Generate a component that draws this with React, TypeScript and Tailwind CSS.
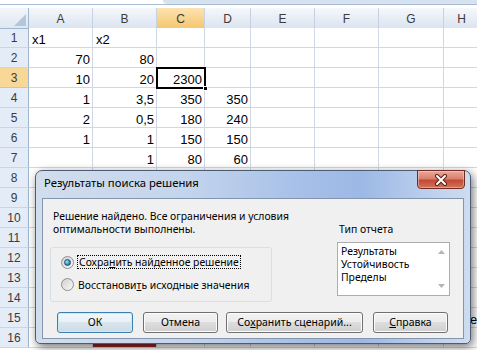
import React from "react";

const COLS = ["A", "B", "C", "D", "E", "F", "G", "H"];

type Cell = { v: string; left?: boolean } | null;

const DATA: Record<number, Cell[]> = {
  1: [{ v: "x1", left: true }, { v: "x2", left: true }],
  2: [{ v: "70" }, { v: "80" }],
  3: [{ v: "10" }, { v: "20" }, { v: "2300" }],
  4: [{ v: "1" }, { v: "3,5" }, { v: "350" }, { v: "350" }],
  5: [{ v: "2" }, { v: "0,5" }, { v: "180" }, { v: "240" }],
  6: [{ v: "1" }, { v: "1" }, { v: "150" }, { v: "150" }],
  7: [null, { v: "1" }, { v: "80" }, { v: "60" }],
};

const ROWS = Array.from({ length: 16 }, (_, i) => i + 1);

function Sheet() {
  return (
    <div className="grid grid-cols-[29px_64px_64px_48px_46px_64px_64px_65px_1fr] auto-rows-[20px] font-['Liberation_Sans',Arial,sans-serif]">
      <div className="h-[21px] border-r border-b border-[#9eb6ce] bg-[linear-gradient(#f3f6fa,#dfe7f1)] relative">
        <div className="absolute right-[2px] bottom-[2px] w-0 h-0 border-l-[12px] border-l-transparent border-b-[12px] border-b-[#b6c6da]" />
      </div>
      {COLS.map((c) => (
        <div
          key={c}
          className={
            c === "C"
              ? "h-[21px] border-r border-b border-r-[#c9d3e0] border-b-[#f2b54a] bg-[linear-gradient(#fbe3b2,#f6c66f)] flex items-center justify-center pt-[2px] text-[12px] text-[#3b3b3b]"
              : "h-[21px] border-r border-b border-r-[#c5d2e3] border-b-[#9eb6ce] bg-[linear-gradient(#f5f8fc,#dbe4f0)] flex items-center justify-center pt-[2px] text-[12px] text-[#3b3b3b]"
          }
        >
          {c}
        </div>
      ))}
      {ROWS.map((r) => (
        <React.Fragment key={r}>
          <div
            className={
              r === 3
                ? "border-r border-b border-r-[#9eb6ce] border-b-[#f2c16a] bg-[#f9d796] flex items-center justify-center pt-[1px] text-[12px] text-[#3b3b3b]"
                : "border-r border-b border-r-[#9eb6ce] border-b-[#c9d6e7] bg-[#e4ecf7] flex items-center justify-center pt-[1px] text-[12px] text-[#3b3b3b]"
            }
          >
            {r}
          </div>
          {COLS.map((c, ci) => {
            const cell = DATA[r]?.[ci] ?? null;
            const sel = r === 3 && c === "C";
            const red = r === 16 && c === "B";
            return (
              <div
                key={c}
                className={
                  (red ? "bg-[#9a2424] " : "bg-white ") +
                  "relative border-r border-b border-[#d0d7e5] flex items-end leading-[15px] text-[13px] text-black " +
                  (cell?.left ? "justify-start pl-[3px]" : "justify-end pr-[2px]")
                }
              >
                {cell?.v}
                {r === 15 && c === "H" && <span className="pl-[26px] text-[13px]">е</span>}
                {sel && (
                  <>
                    <div className="absolute left-[-1px] top-[-1px] w-[50px] h-[22px] border-2 border-black z-10 pointer-events-none" />
                    <div className="absolute left-[46px] top-[18px] w-[5px] h-[5px] bg-black border border-white z-20" />
                  </>
                )}
              </div>
            );
          })}
        </React.Fragment>
      ))}
    </div>
  );
}

function Radio({ checked }: { checked?: boolean }) {
  return (
    <span className="w-[13px] h-[13px] rounded-full border border-[#8e8f8f] bg-[linear-gradient(135deg,#d0d0d0,#fafafa)] flex items-center justify-center shrink-0">
      {checked && (
        <span className="w-[7px] h-[7px] rounded-full border border-[#1d4f6e] bg-[radial-gradient(circle_at_35%_35%,#9be6fb,#2d8cc0_60%,#15527a)]" />
      )}
    </span>
  );
}

function Btn({
  children,
  w,
  def,
}: {
  children: React.ReactNode;
  w: string;
  def?: boolean;
}) {
  return (
    <div
      className={
        w +
        " h-[21px] rounded-[3px] flex items-center justify-center text-[10.5px] text-black " +
        (def
          ? "border border-[#3c7fb1] shadow-[inset_0_0_0_1px_#c4ecfb] bg-[linear-gradient(#f2f8fb_0%,#e8f1f6_49%,#d9e5ec_50%,#cbdbe5_100%)]"
          : "border border-[#707070] shadow-[inset_0_0_0_1px_#fcfcfc] bg-[linear-gradient(#f2f2f2_0%,#ebebeb_49%,#dddddd_50%,#cfcfcf_100%)]")
      }
    >
      {children}
    </div>
  );
}

function Dialog() {
  return (
    <div className="absolute left-[35px] top-[170px] w-[436px] h-[174px] rounded-t-[7px] rounded-b-[5px] border border-[#4a5d75] shadow-[2px_3px_10px_rgba(0,0,0,0.55)] bg-[linear-gradient(90deg,#d2ddec_0%,#c3d4ec_35%,#a6bfe8_62%,#9db8e6_75%,#bfd1ee_92%,#cfdcef_100%)] font-['Noto_Sans',sans-serif] flex flex-col">
      <div className="h-[27px] shrink-0 flex items-center pl-[8px] pb-[3px] text-[11.3px] text-black relative">
        Результаты поиска решения
        <div className="absolute right-[5px] top-[-1px] w-[48px] h-[19px] rounded-b-[4px] border border-[#6e2b21] bg-[linear-gradient(#eaa89b_0%,#d9806f_45%,#c34a34_55%,#d0735b_100%)] shadow-[inset_0_0_0_1px_rgba(255,220,210,0.45)] flex items-center justify-center">
          <svg width="14" height="12" viewBox="0 0 14 12">
            <path d="M3 2 L11 10 M11 2 L3 10" stroke="#5a2018" strokeWidth="4" strokeLinecap="round" />
            <path d="M3 2 L11 10 M11 2 L3 10" stroke="#ffffff" strokeWidth="2" strokeLinecap="round" />
          </svg>
        </div>
      </div>
      <div className="mx-[6px] h-[141px] shrink-0 border border-[#8396ae] bg-[#f0f0f0] pl-[7px] pt-[11px] text-[10.4px] text-black">
        <div className="flex">
          <div className="w-[222px] shrink-0">
            <div className="pl-[3px] leading-[13px] whitespace-nowrap">
              <div>Решение найдено. Все ограничения и условия</div>
              <div>оптимальности выполнены.</div>
            </div>
            <div className="mt-[11px] h-[55px] rounded-[3px] border border-[#d5dfe5] pl-[10px] pt-[7px] flex flex-col gap-[9px]">
              <div className="flex items-center gap-[3px]">
                <Radio checked />
                <span className="border border-dotted border-black px-[1px] leading-[12px] whitespace-nowrap">
                  Сохра<span className="underline underline-offset-1">н</span>ить найденное решение
                </span>
              </div>
              <div className="flex items-center gap-[4px]">
                <Radio />
                <span className="leading-[12px] whitespace-nowrap">
                  Восстанови<span className="underline underline-offset-1">т</span>ь исходные значения
                </span>
              </div>
            </div>
          </div>
          <div className="ml-[65px] pt-[13px]">
            <div className="pl-[2px] leading-[13px]">Тип отчета</div>
            <div className="mt-[6px] w-[113px] h-[54px] border border-[#abadb3] bg-white flex">
              <div className="flex-1 pl-[3px] pt-[2px] leading-[13px]">
                <div>Результаты</div>
                <div>Устойчивость</div>
                <div>Пределы</div>
              </div>
              <div className="w-[15px] flex flex-col justify-between items-center py-[7px]">
                <svg width="7" height="4" viewBox="0 0 7 4">
                  <path d="M0 4 L3.5 0 L7 4 Z" fill="#b4b4b4" />
                </svg>
                <svg width="7" height="4" viewBox="0 0 7 4">
                  <path d="M0 0 L3.5 4 L7 0 Z" fill="#b4b4b4" />
                </svg>
              </div>
            </div>
          </div>
        </div>
        <div className="flex mt-[10px] ml-[7px]">
          <Btn w="w-[76px]" def>
            ОК
          </Btn>
          <div className="ml-[10px]">
            <Btn w="w-[75px]">Отмена</Btn>
          </div>
          <div className="ml-[8px]">
            <Btn w="w-[137px]">
              Со<span className="underline underline-offset-1">х</span>ранить сценарий...
            </Btn>
          </div>
          <div className="ml-[10px]">
            <Btn w="w-[75px]">
              <span className="underline underline-offset-1">С</span>правка
            </Btn>
          </div>
        </div>
      </div>
    </div>
  );
}

export default function App() {
  return (
    <div className="relative w-[477px] h-[350px] overflow-hidden bg-white">
      <div className="h-[8px] flex flex-col">
        <div className="h-[4px] flex">
          <div className="w-[163px] bg-white" />
          <div className="flex-1 bg-[#d7e2f0] rounded-bl-[4px]" />
        </div>
        <div className="h-[1px] bg-[#a9bcd5]" />
        <div className="h-[3px] bg-white" />
      </div>
      <Sheet />
      <Dialog />
    </div>
  );
}
